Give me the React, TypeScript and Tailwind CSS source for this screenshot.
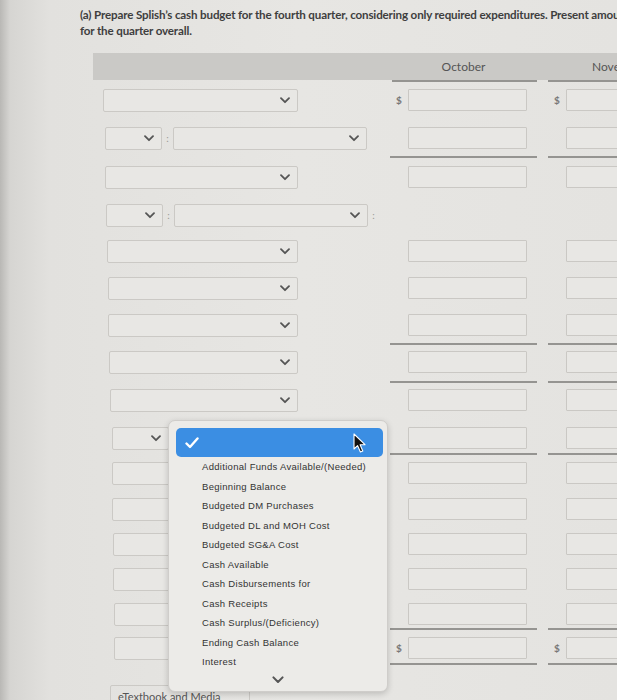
import React from 'react'

type LeftKind = 'wide' | 'pair' | 'pair2' | 'none'

interface RowDef {
  h: string
  kind: LeftKind
  pad: string
  wide: string
  inputs: boolean
  dollar?: boolean
  line?: string
}

const rows: RowDef[] = [
  { h: 'h-[38px]', kind: 'wide', pad: 'ml-[10px]', wide: 'w-[195px]', inputs: true, dollar: true },
  { h: 'h-[39px]', kind: 'pair', pad: 'ml-[12px]', wide: 'w-[194px]', inputs: true, line: 'h-[31px]' },
  { h: 'h-[38px]', kind: 'wide', pad: 'ml-[12px]', wide: 'w-[193px]', inputs: true },
  { h: 'h-[36px]', kind: 'pair2', pad: 'ml-[13px]', wide: 'w-[193px]', inputs: false },
  { h: 'h-[37px]', kind: 'wide', pad: 'ml-[14px]', wide: 'w-[191px]', inputs: true },
  { h: 'h-[37px]', kind: 'wide', pad: 'ml-[15px]', wide: 'w-[190px]', inputs: true },
  { h: 'h-[37px]', kind: 'wide', pad: 'ml-[15px]', wide: 'w-[190px]', inputs: true, line: 'h-[31px]' },
  { h: 'h-[38px]', kind: 'wide', pad: 'ml-[16px]', wide: 'w-[189px]', inputs: true, line: 'h-[32px]' },
  { h: 'h-[38px]', kind: 'wide', pad: 'ml-[17px]', wide: 'w-[188px]', inputs: true },
  { h: 'h-[35px]', kind: 'pair', pad: 'ml-[19px]', wide: 'w-[190px]', inputs: true, line: 'h-[28px]' },
  { h: 'h-[36px]', kind: 'wide', pad: 'ml-[19px]', wide: 'w-[186px]', inputs: true },
  { h: 'h-[35px]', kind: 'wide', pad: 'ml-[19px]', wide: 'w-[186px]', inputs: true },
  { h: 'h-[35px]', kind: 'wide', pad: 'ml-[20px]', wide: 'w-[185px]', inputs: true },
  { h: 'h-[35px]', kind: 'wide', pad: 'ml-[20px]', wide: 'w-[185px]', inputs: true },
  { h: 'h-[34px]', kind: 'wide', pad: 'ml-[21px]', wide: 'w-[184px]', inputs: true, line: 'h-[27px]' },
  { h: 'h-[48px]', kind: 'wide', pad: 'ml-[21px]', wide: 'w-[184px]', inputs: true, dollar: true, line: 'h-[28px]' },
]

const options = [
  'Additional Funds Available/(Needed)',
  'Beginning Balance',
  'Budgeted DM Purchases',
  'Budgeted DL and MOH Cost',
  'Budgeted SG&A Cost',
  'Cash Available',
  'Cash Disbursements for',
  'Cash Receipts',
  'Cash Surplus/(Deficiency)',
  'Ending Cash Balance',
  'Interest',
]

function Chevron({ className = '' }: { className?: string }) {
  return (
    <svg width="10" height="7" viewBox="0 0 10 7" className={className}>
      <path d="M1 1.2 L5 5.2 L9 1.2" fill="none" stroke="#555" strokeWidth="1.8" strokeLinecap="round" strokeLinejoin="round" />
    </svg>
  )
}

function Select({ width }: { width: string }) {
  return (
    <div className={`${width} h-[23px] shrink-0 border border-[#cbc9c5] bg-[#e8e7e4] rounded-[2px] flex items-center justify-end pr-[7px]`}>
      <Chevron />
    </div>
  )
}

function Colon() {
  return <div className="w-[11px] shrink-0 text-center text-[10px] leading-[23px] text-[#9a9996]">:</div>
}

function NumCell({ dollar, line, width }: { dollar?: boolean; line?: string; width: string }) {
  const box = (
    <div className="flex items-start">
      <div className="w-[18px] shrink-0 text-[10px] leading-[22px] font-bold text-[#777] pl-[6px]">{dollar ? '$' : ''}</div>
      <div className={`${width} h-[22px] border border-[#cac8c4] bg-[#e8e7e4] rounded-[1px]`} />
    </div>
  )
  if (line) {
    return <div className={`${line} border-b-2 border-[#959491]`}>{box}</div>
  }
  return box
}

export default function App() {
  return (
    <div className="relative w-[617px] h-[700px] overflow-hidden font-['Lato','Liberation_Sans',sans-serif] bg-[linear-gradient(90deg,#b9b8b5_0px,#d6d5d2_10px,#e2e1de_50px,#e7e6e3_300px,#e4e3e0_617px)]">
      <div className="pl-[80px] pt-[7px] text-[11.6px] leading-[16px] font-bold text-[#3e3e3e] whitespace-nowrap tracking-[-0.15px]">
        <div>(a) Prepare Splish’s cash budget for the fourth quarter, considering only required expenditures. Present amounts</div>
        <div>for the quarter overall.</div>
      </div>

      <div className="ml-[93px] mt-[14px] w-[600px] h-[27px] bg-[#cac9c6] flex">
        <div className="w-[297px] shrink-0" />
        <div className="w-[147px] shrink-0 text-center text-[12px] leading-[27px] text-[#555]">October</div>
        <div className="w-[11px] shrink-0" />
        <div className="pl-[44px] text-[12px] leading-[27px] text-[#555] whitespace-nowrap">November</div>
      </div>
      <div className="ml-[93px] w-[600px] flex">
        <div className="w-[299px] shrink-0" />
        <div className="w-[145px] shrink-0 h-[2px] bg-[#959491]" />
        <div className="w-[11px] shrink-0" />
        <div className="w-[140px] shrink-0 h-[2px] bg-[#959491]" />
      </div>

      <div className="ml-[93px] mt-[7px]">
        {rows.map((r, i) => (
          <div key={i} className={`${r.h} flex items-start`}>
            <div className="w-[297px] shrink-0">
              <div className={`${r.pad} flex items-start`}>
                {r.kind === 'wide' && <Select width={r.wide} />}
                {(r.kind === 'pair' || r.kind === 'pair2') && (
                  <>
                    <Select width="w-[57px]" />
                    <Colon />
                    <Select width="w-[194px]" />
                    {r.kind === 'pair2' && <Colon />}
                  </>
                )}
              </div>
            </div>
            {r.inputs && (
              <>
                <div className="w-[147px] shrink-0">
                  <NumCell dollar={r.dollar} line={r.line} width="w-[119px]" />
                </div>
                <div className="w-[11px] shrink-0" />
                <div className="w-[140px] shrink-0">
                  <NumCell dollar={r.dollar} line={r.line} width="w-[119px]" />
                </div>
              </>
            )}
          </div>
        ))}
        <div className="ml-[17px] w-[140px] h-[20px] border border-[#cbc9c5] rounded-[2px] pl-[7px] text-[11px] leading-[22px] text-[#555]">
          eTextbook and Media
        </div>
      </div>

      <div className="absolute left-[168px] top-[420px] w-[220px] h-[272px] rounded-[7px] bg-[#ecebe8] border border-[#cfcdca] shadow-[0_2px_6px_rgba(0,0,0,0.18)] pt-[7px] pl-[7px] pr-[4px]">
        <div className="relative h-[29px] rounded-[5px] bg-[#3b8ee3] flex items-center pl-[9px]">
          <svg width="14" height="12" viewBox="0 0 14 12">
            <path d="M1.5 6.5 L5 10 L12.5 1.5" fill="none" stroke="#ffffff" strokeWidth="2.4" strokeLinecap="round" strokeLinejoin="round" />
          </svg>
          <svg width="14" height="21" viewBox="0 0 14 21" className="absolute left-[177px] top-[5px]">
            <path d="M1 1 L1 16 L4.6 12.6 L7.4 19 L9.8 18 L7.1 11.7 L12 11.7 Z" fill="#111" stroke="#fff" strokeWidth="1.1" strokeLinejoin="round" />
          </svg>
        </div>
        <div className="pl-[26px] font-['Liberation_Sans',sans-serif] text-[9.5px] tracking-[0.3px] text-[#333]">
          {options.map((o) => (
            <div key={o} className="h-[19.5px] leading-[19.5px] whitespace-nowrap">{o}</div>
          ))}
        </div>
        <div className="flex justify-center pt-[4px] pr-[3px]">
          <Chevron className="w-[12px] h-[8px]" />
        </div>
      </div>
    </div>
  )
}
